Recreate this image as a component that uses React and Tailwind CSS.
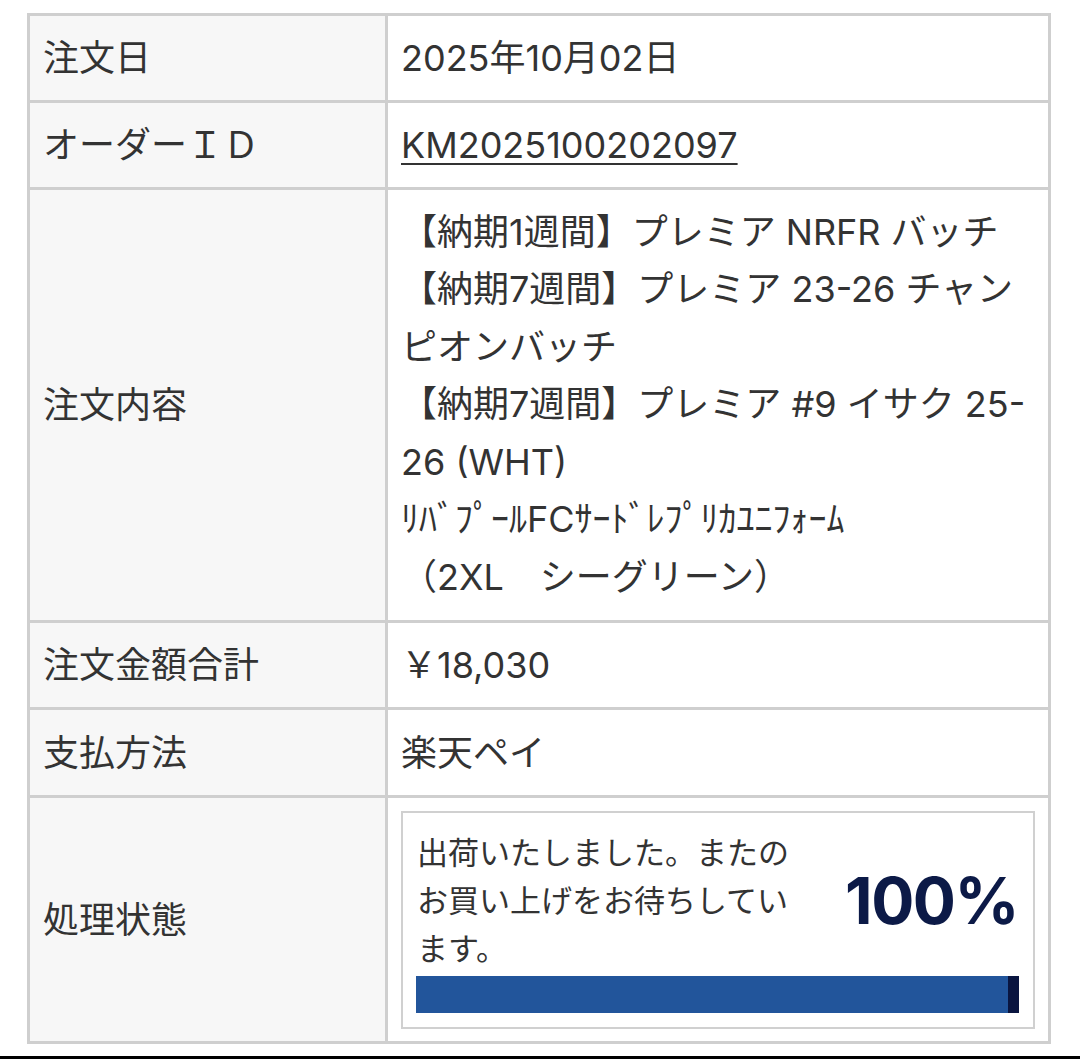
import React from 'react';

const font = { fontFamily: '"Inter", "Noto Sans CJK JP", sans-serif' };

// 行の定義（ラベルと高さ）
const Row = ({ label, h, first, children }) => (
    <div className={`flex ${first ? '' : 'border-t-[3px] border-[#cfcfcf]'}`}>
        <div className={`w-[358px] shrink-0 bg-[#f7f7f7] border-r-[3px] border-[#cfcfcf] px-[13px] flex items-center ${h}`}>
            <span className="text-[36px] text-[#333]">{label}</span>
        </div>
        <div className="flex-1 px-[13px] flex items-center text-[36px] text-[#333]">
            {children}
        </div>
    </div>
);

export default function App() {
    const items = [
        '【納期1週間】プレミア NRFR バッチ',
        '【納期7週間】プレミア 23-26 チャン',
        'ピオンバッチ',
        '【納期7週間】プレミア #9 イサク 25-',
        '26 (WHT)',
    ];

    return (
        <div className="bg-white w-[1080px] h-[1059px] overflow-hidden" style={font}>
            <div className="pt-[13px] pl-[27px]">
                <div className="w-[1024px] border-[3px] border-[#cfcfcf]">
                    <Row label="注文日" h="h-[84px]" first>
                        <span>2025年10月02日</span>
                    </Row>
                    <Row label="オーダーＩＤ" h="h-[84px]">
                        <span className="underline decoration-2 underline-offset-[5px]">KM2025100202097</span>
                    </Row>
                    <Row label="注文内容" h="h-[430px]">
                        <div className="leading-[57.5px] whitespace-nowrap">
                            {items.map((t, i) => (
                                <div key={i}>{t}</div>
                            ))}
                            <div>ﾘﾊﾞﾌﾟｰﾙFCｻｰﾄﾞﾚﾌﾟﾘｶﾕﾆﾌｫｰﾑ</div>
                            <div>（2XL　シーグリーン）</div>
                        </div>
                    </Row>
                    <Row label="注文金額合計" h="h-[84px]">
                        <span>￥18,030</span>
                    </Row>
                    <Row label="支払方法" h="h-[85px]">
                        <span>楽天ペイ</span>
                    </Row>
                    <Row label="処理状態" h="h-[243px]">
                        <div className="w-full border-2 border-[#d0d0d0] pt-[16px] pb-[14px] px-[13px]">
                            <div className="flex items-center justify-between">
                                <div className="text-[31px] leading-[48px] w-[390px] pl-[1px]">
                                    出荷いたしました。またのお買い上げをお待ちしています。
                                </div>
                                <div className="text-[64px] font-bold text-[#0c1a47] pr-[2px] tracking-[-1.5px]">100%</div>
                            </div>
                            <div className="mt-[3px] h-[37px] flex pr-[1px]">
                                <div className="flex-1 bg-[#22559b]"></div>
                                <div className="w-[11px] bg-[#0a1540]"></div>
                            </div>
                        </div>
                    </Row>
                </div>
            </div>
            <div className="mt-[12px] h-[3px] bg-black"></div>
        </div>
    );
}
